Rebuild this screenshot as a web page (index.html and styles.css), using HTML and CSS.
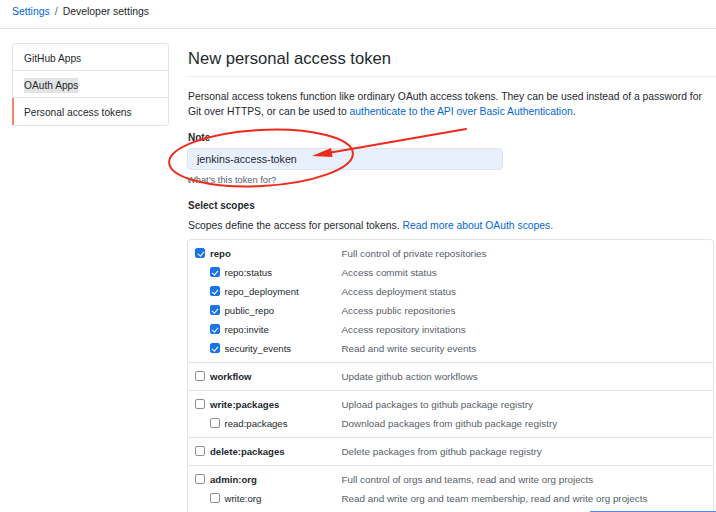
FILE: index.html
```html
<!DOCTYPE html>
<html>
<head>
<meta charset="utf-8">
<link rel="stylesheet" href="styles.css">
</head>
<body>
<div class="page">
  <header class="crumbs">
    <a class="link">Settings</a><span class="sep">/</span><span class="cur">Developer settings</span>
  </header>
  <div class="layout">
    <nav class="menu">
      <div class="menu-item">GitHub Apps</div>
      <div class="menu-item"><span class="hl">OAuth Apps</span></div>
      <div class="menu-item selected">Personal access tokens</div>
    </nav>
    <main class="main">
      <h1 class="title">New personal access token</h1>
      <p class="intro">Personal access tokens function like ordinary OAuth access tokens. They can be used instead of a password for Git over HTTPS, or can be used to <a class="link">authenticate to the API over Basic Authentication</a>.</p>
      <div class="label note-label">Note</div>
      <div class="input">jenkins-access-token</div>
      <div class="hint">What’s this token for?</div>
      <div class="label scopes-title">Select scopes</div>
      <p class="scopes-note">Scopes define the access for personal tokens. <a class="link">Read more about OAuth scopes.</a></p>
      <div class="scopes">
        <div class="group">
          <div class="row"><span class="cell"><span class="cb on"></span><b>repo</b></span><span class="desc">Full control of private repositories</span></div>
          <div class="row child"><span class="cell"><span class="cb on"></span>repo:status</span><span class="desc">Access commit status</span></div>
          <div class="row child"><span class="cell"><span class="cb on"></span>repo_deployment</span><span class="desc">Access deployment status</span></div>
          <div class="row child"><span class="cell"><span class="cb on"></span>public_repo</span><span class="desc">Access public repositories</span></div>
          <div class="row child"><span class="cell"><span class="cb on"></span>repo:invite</span><span class="desc">Access repository invitations</span></div>
          <div class="row child"><span class="cell"><span class="cb on"></span>security_events</span><span class="desc">Read and write security events</span></div>
        </div>
        <div class="group">
          <div class="row"><span class="cell"><span class="cb"></span><b>workflow</b></span><span class="desc">Update github action workflows</span></div>
        </div>
        <div class="group">
          <div class="row"><span class="cell"><span class="cb"></span><b>write:packages</b></span><span class="desc">Upload packages to github package registry</span></div>
          <div class="row child"><span class="cell"><span class="cb"></span>read:packages</span><span class="desc">Download packages from github package registry</span></div>
        </div>
        <div class="group">
          <div class="row"><span class="cell"><span class="cb"></span><b>delete:packages</b></span><span class="desc">Delete packages from github package registry</span></div>
        </div>
        <div class="group">
          <div class="row"><span class="cell"><span class="cb"></span><b>admin:org</b></span><span class="desc">Full control of orgs and teams, read and write org projects</span></div>
          <div class="row child"><span class="cell"><span class="cb"></span>write:org</span><span class="desc">Read and write org and team membership, read and write org projects</span></div>
          <div class="row child"><span class="cell"><span class="cb"></span>read:org</span><span class="desc">Read org and team membership, read org projects</span></div>
        </div>
      </div>
    </main>
  </div>
  <div class="focus-line"></div>
  <svg class="annot" width="716" height="512" viewBox="0 0 716 512">
    <ellipse cx="261" cy="158" rx="92" ry="28" transform="rotate(-3 261 158)" fill="none" stroke="#ee2a1b" stroke-width="2"/>
    <line x1="466" y1="129" x2="328" y2="153" stroke="#ee2a1b" stroke-width="2" stroke-linecap="round"/>
    <polygon points="312,156 331,148 332.5,157" fill="#ee2a1b"/>
  </svg>
</div>
</body>
</html>
```
FILE: styles.css
```css
* { box-sizing: border-box; }
html, body { margin: 0; padding: 0; }
body {
  font-family: "Liberation Sans", Arial, sans-serif;
  color: #24292e;
  background: #fff;
  width: 716px;
  height: 512px;
  overflow: hidden;
}
.page { position: relative; width: 716px; height: 512px; overflow: hidden; }
.link { color: #0366d6; text-decoration: none; }
.crumbs {
  height: 29px;
  border-bottom: 1px solid #e1e4e8;
  padding: 5px 12px 0;
  font-size: 10.45px;
  line-height: 14px;
}
.sep { color: #586069; margin: 0 5px; }
.layout { display: flex; padding-left: 12px; gap: 18px; }
.menu {
  width: 157px;
  flex: none;
  margin-top: 14px;
  align-self: flex-start;
  border: 1px solid #e1e4e8;
  border-radius: 3px;
  font-size: 10.2px;
}
.menu-item {
  height: 27px;
  display: flex;
  align-items: center;
  padding-left: 11px;
  padding-top: 2px;
  border-bottom: 1px solid #e1e4e8;
}
.menu-item:last-child { border-bottom: 0; height: 27px; }
.menu-item.selected { border-left: 2px solid #f9826c; padding-left: 10px; margin-left: -1px; }
.hl { background: #e3e3e3; padding: 2px 0; }
.main { flex: 1; min-width: 0; margin-top: 15px; }
.title {
  margin: 0;
  font-size: 16.6px;
  font-weight: 400;
  line-height: 24px;
  padding: 3px 0 5px 1px;
  border-bottom: 1px solid #eaecef;
  margin-right: -2px;
}
.intro { margin: 12px 0 0 1px; font-size: 10.35px; line-height: 15px; padding-right: 10px; }
.label { font-size: 10px; font-weight: 700; line-height: 15px; margin-left: 1px; }
.note-label { margin-top: 11px; }
.input {
  margin-top: 3px;
  width: 316px;
  height: 22px;
  background: #e8f0fe;
  border: 1px solid #dfe5ee;
  border-radius: 4px;
  padding-left: 9px;
  font-size: 10.7px;
  line-height: 20px;
}
.hint { font-size: 9.3px; color: #586069; margin-top: 4px; line-height: 12px; }
.scopes-title { margin-top: 12px; }
.scopes-note { margin: 5px 0 0 1px; font-size: 10.35px; line-height: 15px; }
.scopes {
  margin-top: 6px;
  margin-right: 2px;
  border: 1px solid #e1e4e8;
  border-radius: 4px;
}
.group { padding: 4px 0 4px 7px; border-bottom: 1px solid #e1e4e8; }
.group:first-child { padding-top: 3.5px; }
.group:last-child { border-bottom: 0; }
.row { display: flex; align-items: center; height: 19px; }
.cell { width: 146.5px; flex: none; display: flex; align-items: center; gap: 5px; font-size: 9.6px; }
.cell b { font-weight: 700; }
.row.child .cell { padding-left: 14.5px; }
.desc { color: #586069; font-size: 9.85px; }
.cb {
  width: 10px; height: 10px;
  border: 1px solid #8a9099;
  border-radius: 2px;
  background: #fff;
  flex: none;
  position: relative;
}
.cb.on { background: #1a73e8; border-color: #1a73e8; }
.cb.on::after {
  content: "";
  position: absolute;
  left: 2.5px; top: 0.5px;
  width: 2.5px; height: 5px;
  border: solid #fff;
  border-width: 0 1.5px 1.5px 0;
  transform: rotate(40deg);
}
.focus-line { position: absolute; left: 590px; top: 511px; width: 126px; height: 1px; background: #4a8ff0; }
.annot { position: absolute; left: 0; top: 0; pointer-events: none; }
```
